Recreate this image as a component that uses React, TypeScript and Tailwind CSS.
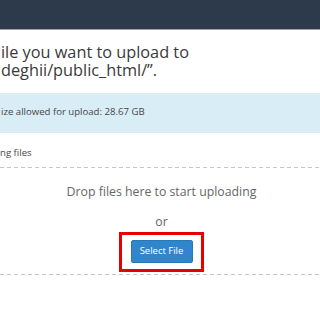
import React from 'react';

function DashedRule() {
    return (
        <div className="h-px w-full bg-[linear-gradient(to_right,#c6c6c6_4px,transparent_4px)] bg-[length:7px_1px]"/>
    );
}

export default function App() {
    return (
        <div className="w-[320px] h-[320px] overflow-hidden bg-white font-['Open_Sans',sans-serif]">
            {/* top bar */}
            <div className="h-[30px] bg-[#2c3a4b] border-b border-[#9aa1aa]"/>

            <p className="mt-[14px] pl-px text-[16.3px] leading-[17.5px] text-[#3a3a3a] whitespace-nowrap">
                ile you want to upload to<br/>deghii/public_html/”.
            </p>

            <div className="mt-[13.5px] h-[40px] bg-[#d9edf7] flex items-center pl-px text-[9.6px] text-[#474747] whitespace-nowrap">
                ize allowed for upload: 28.67 GB
            </div>

            <div className="mt-[13px] text-[9.6px] leading-[14px] text-[#474747]">ng files</div>

            <div className="mt-[7px]">
                <DashedRule/>
            </div>

            <div className="pl-[3px] flex flex-col items-center">
                <p className="mt-[16px] text-[12.3px] leading-[16px] text-[#666]">
                    Drop files here to start uploading
                </p>
                <p className="mt-[14px] text-[12.3px] leading-[16px] text-[#666]">or</p>
                <div className="mt-[2px] w-[85px] h-[40px] border-[3px] border-[#e60000] flex items-center justify-center">
                    <button className="w-[62px] h-[23px] rounded-[2px] bg-[#3185cb] border border-[#2b78b9] text-white text-[9.5px]">
                        Select File
                    </button>
                </div>
            </div>

            <div className="mt-[2px]">
                <DashedRule/>
            </div>
        </div>
    );
}
